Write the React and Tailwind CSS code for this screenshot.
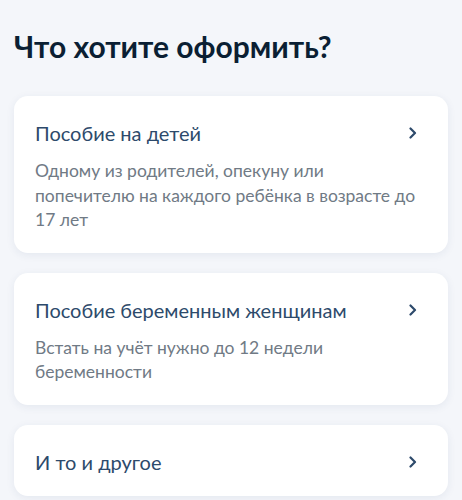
import React from "react";

const items = [
  {
    title: "Пособие на детей",
    text: "Одному из родителей, опекуну или попечителю на каждого ребёнка в возрасте до 17 лет",
  },
  {
    title: "Пособие беременным женщинам",
    text: "Встать на учёт нужно до 12 недели беременности",
  },
  { title: "И то и другое" },
];

function Chevron() {
  return (
    <svg width="8" height="12" viewBox="0 0 8 12" fill="none" className="shrink-0">
      <path d="M1.5 1.5 6 6l-4.5 4.5" stroke="#2d4a6b" strokeWidth="2.2" strokeLinecap="round" strokeLinejoin="round" />
    </svg>
  );
}

export default function App() {
  return (
    <div className="min-h-[500px] bg-[#f4f6fa] px-[14px] pt-[28px] font-['Lato','Noto_Sans',sans-serif]">
      <h1 className="text-[30px] font-bold leading-[36px] text-[#0b1f33]">Что хотите оформить?</h1>

      <div className="mt-[32px] flex flex-col gap-[20px]">
        {items.map((item) => (
          <div
            key={item.title}
            className="rounded-[14px] bg-white px-[21px] pt-[23px] pb-[20px] shadow-[0_2px_8px_rgba(40,60,110,0.08)]"
          >
            <div className="flex items-center justify-between pr-[10px]">
              <span className="text-[20px] leading-[28px] text-[#2d4a6b]">{item.title}</span>
              <Chevron />
            </div>
            {item.text && (
              <p className="mt-[12px] text-[17.5px] leading-[24.5px] text-[#707a85]">{item.text}</p>
            )}
          </div>
        ))}
      </div>
    </div>
  );
}
